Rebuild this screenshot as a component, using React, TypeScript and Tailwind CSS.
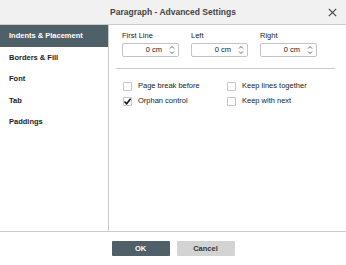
import React from "react";

const tabs = ["Indents & Placement", "Borders & Fill", "Font", "Tab", "Paddings"];

function Spinner() {
  return (
    <svg width="6" height="10" viewBox="0 0 6 10" className="shrink-0">
      <path d="M1 3.5 L3 1.5 L5 3.5" fill="none" stroke="#555" strokeWidth="0.9" />
      <path d="M1 6.5 L3 8.5 L5 6.5" fill="none" stroke="#555" strokeWidth="0.9" />
    </svg>
  );
}

function SpinField({ label }: { label: string }) {
  return (
    <div className="flex flex-col w-[57px]">
      <div className="h-[9px] leading-[9px] mb-[3px] text-[7.5px] text-[#222]">{label}</div>
      <div className="h-[14px] flex items-center justify-end border border-[#c4c4c4] rounded-[2px] bg-white pr-[3px] gap-[7px]">
        <span className="text-[7.5px] text-[#222]">0 cm</span>
        <Spinner />
      </div>
    </div>
  );
}

function Check({ label, checked }: { label: string; checked?: boolean }) {
  return (
    <div className="w-[104px] h-[10px] flex items-center gap-[6px]">
      <div className="w-[9px] h-[9px] border border-[#c4c4c4] rounded-[1px] bg-white relative shrink-0">
        {checked && (
          <svg width="9" height="9" viewBox="0 0 9 9" className="absolute -top-px -left-px">
            <path d="M1.5 4.5 L3.6 6.8 L7.6 1.8" fill="none" stroke="#111" strokeWidth="1.5" />
          </svg>
        )}
      </div>
      <span className="text-[7.5px] text-[#222] whitespace-nowrap">{label}</span>
    </div>
  );
}

export default function App() {
  return (
    <div
      className="w-[346px] h-[265px] flex flex-col bg-white overflow-hidden"
      style={{ fontFamily: '"Liberation Sans", Arial, sans-serif' }}
    >
      {/* Title bar */}
      <div className="h-[25px] shrink-0 flex items-center justify-center relative bg-[#f1f1f1] border-b border-[#cbcbcb]">
        <span className="text-[8.5px] font-bold text-[#444]">Paragraph - Advanced Settings</span>
        <svg width="9" height="9" viewBox="0 0 9 9" className="absolute right-[9px] top-[8px]">
          <path d="M0.8 0.8 L8.2 8.2 M8.2 0.8 L0.8 8.2" stroke="#444" strokeWidth="1.2" />
        </svg>
      </div>

      {/* Body */}
      <div className="flex-1 flex min-h-0">
        <div className="w-[109px] shrink-0 border-r border-[#cbcbcb] flex flex-col">
          {tabs.map((t, i) => (
            <div
              key={t}
              className={`h-[21.5px] flex items-center pl-[9px] text-[7.5px] font-bold ${
                i === 0 ? "bg-[#4f6068] text-white" : "text-[#222]"
              }`}
            >
              {t}
            </div>
          ))}
        </div>

        <div className="flex-1 pt-[6px] pl-[7px] pr-[11px]">
          <div className="flex gap-[12px] pl-[6px]">
            <SpinField label="First Line" />
            <SpinField label="Left" />
            <SpinField label="Right" />
          </div>
          <div className="mt-[11px] h-px bg-[#cbcbcb]" />
          <div className="mt-[12px] pl-[7px] flex flex-col gap-[5px]">
            <div className="flex">
              <Check label="Page break before" />
              <Check label="Keep lines together" />
            </div>
            <div className="flex">
              <Check label="Orphan control" checked />
              <Check label="Keep with next" />
            </div>
          </div>
        </div>
      </div>

      {/* Footer */}
      <div className="h-[34px] shrink-0 border-t border-[#cbcbcb] flex items-center justify-center gap-[7px]">
        <button className="w-[58px] h-[15px] bg-[#4f6068] text-white text-[7.5px] font-bold rounded-[1px]">
          OK
        </button>
        <button className="w-[58px] h-[15px] bg-[#d3d3d3] text-[#333] text-[7.5px] font-bold rounded-[1px]">
          Cancel
        </button>
      </div>
    </div>
  );
}
